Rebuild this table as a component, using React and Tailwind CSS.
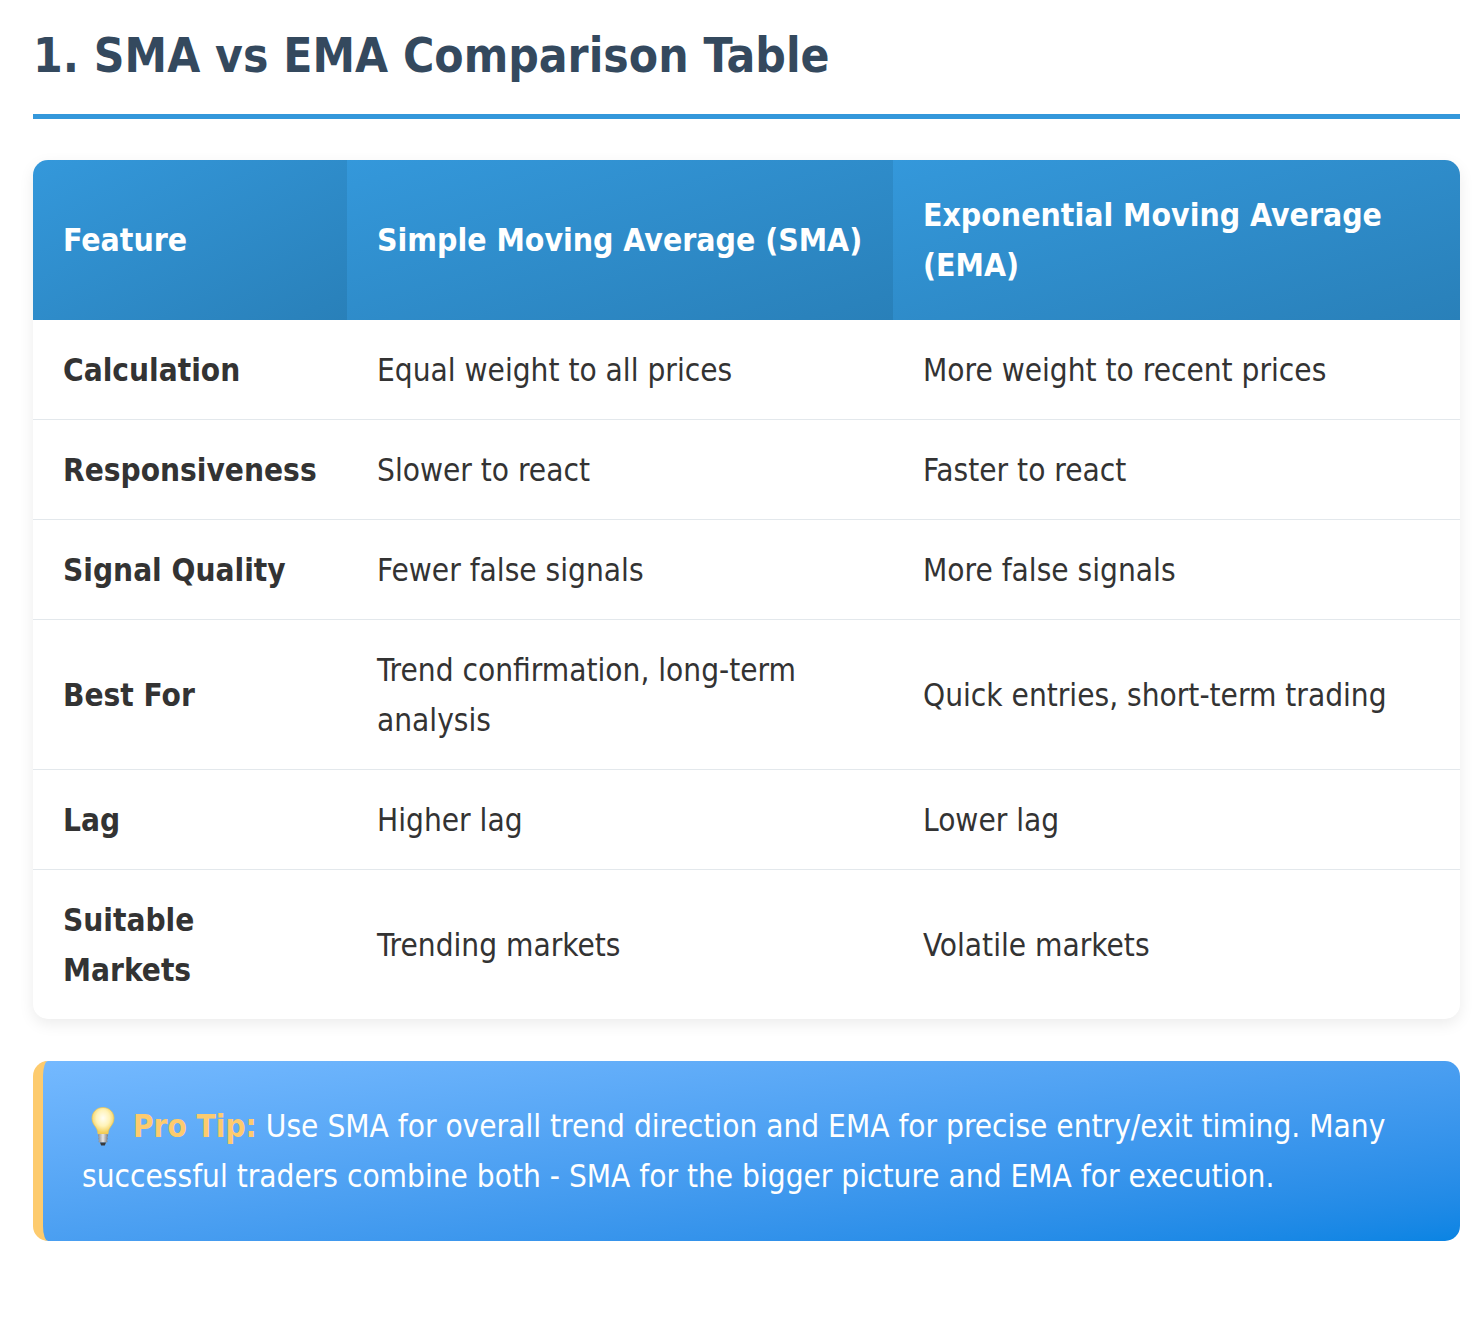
import React from "react";

const rows = [
  ["Calculation", "Equal weight to all prices", "More weight to recent prices"],
  ["Responsiveness", "Slower to react", "Faster to react"],
  ["Signal Quality", "Fewer false signals", "More false signals"],
  ["Best For", "Trend confirmation, long-term analysis", "Quick entries, short-term trading"],
  ["Lag", "Higher lag", "Lower lag"],
  ["Suitable Markets", "Trending markets", "Volatile markets"],
];

// light bulb drawn in place of the emoji
function Bulb() {
  return (
    <svg width="42" height="40" viewBox="0 0 42 40" className="inline-block align-[-10px]">
      <defs>
        <radialGradient id="glass" cx="50%" cy="40%" r="55%">
          <stop offset="0%" stopColor="#fffef4" />
          <stop offset="55%" stopColor="#fff3b8" />
          <stop offset="100%" stopColor="#f3cf5a" />
        </radialGradient>
        <linearGradient id="base" x1="0" x2="1">
          <stop offset="0%" stopColor="#8d8d8d" />
          <stop offset="50%" stopColor="#e6e6e6" />
          <stop offset="100%" stopColor="#7d7d7d" />
        </linearGradient>
      </defs>
      <path
        d="M21 0.5C14.6 0.5 10 5.3 10 11.2c0 3.9 1.8 6.4 3.4 8.6 1.3 1.8 2.3 3.7 2.6 7.2h10c.3-3.5 1.3-5.4 2.6-7.2 1.6-2.2 3.4-4.7 3.4-8.6C32 5.3 27.4 0.5 21 0.5z"
        fill="url(#glass)"
        stroke="#ecc451"
        strokeWidth="0.7"
      />
      <rect x="16" y="27" width="10" height="3" rx="1.2" fill="url(#base)" />
      <rect x="16.3" y="30" width="9.4" height="3" rx="1.2" fill="url(#base)" />
      <rect x="16.6" y="33" width="8.8" height="2.6" rx="1.2" fill="url(#base)" />
      <path d="M18 35.6h6l-1.2 2.8h-3.6z" fill="#3a3a3a" />
    </svg>
  );
}

export default function App() {
  return (
    <main
      className="bg-white pl-[33px] pr-[19px] pt-[28px] pb-[96px] text-[#333]"
      style={{ fontFamily: '"DejaVu Sans Condensed", "DejaVu Sans", sans-serif' }}
    >
      <h2 className="text-[47.5px] leading-[56px] font-bold text-[#34495e] pb-[30px] border-b-[5px] border-[#3498db]">
        1. SMA vs EMA Comparison Table
      </h2>

      {/* comparison table */}
      <div className="mt-[41px] rounded-[15px] overflow-hidden bg-white shadow-[0_5px_15px_rgba(0,0,0,0.08)]">
        <table className="w-full border-collapse table-fixed text-[31.3px] leading-[50px]">
          <thead>
            <tr className="text-[31.7px]">
              <th className="w-[314px] text-left font-bold text-white px-[30px] py-[30px] bg-gradient-to-br from-[#3498db] to-[#2980b9]">
                Feature
              </th>
              <th className="w-[546px] text-left font-bold text-white px-[30px] py-[30px] bg-gradient-to-br from-[#3498db] to-[#2980b9]">
                Simple Moving Average (SMA)
              </th>
              <th className="text-left font-bold text-white px-[30px] py-[30px] bg-gradient-to-br from-[#3498db] to-[#2980b9]">
                Exponential Moving Average (EMA)
              </th>
            </tr>
          </thead>
          <tbody>
            {rows.map((r, i) => (
              <tr key={r[0]} className={i < rows.length - 1 ? "border-b border-[#e3e8ec]" : ""}>
                <td className="px-[30px] py-[24.5px] font-bold text-[#333]">{r[0]}</td>
                <td className="px-[30px] py-[24.5px] text-[#333]">{r[1]}</td>
                <td className="px-[30px] py-[24.5px] text-[#333]">{r[2]}</td>
              </tr>
            ))}
          </tbody>
        </table>
      </div>

      {/* tip box */}
      <div className="mt-[42px] rounded-[15px] border-l-[10px] border-[#fdcb6e] bg-gradient-to-br from-[#74b9ff] to-[#0984e3] text-white text-[31.3px] leading-[50px] pl-[39px] pr-[40px] py-[40px]">
        <Bulb /> <strong className="text-[#fdcb6e]">Pro Tip:</strong> Use SMA for overall trend direction and
        EMA for precise entry/exit timing. Many successful traders combine both - SMA for the bigger picture
        and EMA for execution.
      </div>
    </main>
  );
}
